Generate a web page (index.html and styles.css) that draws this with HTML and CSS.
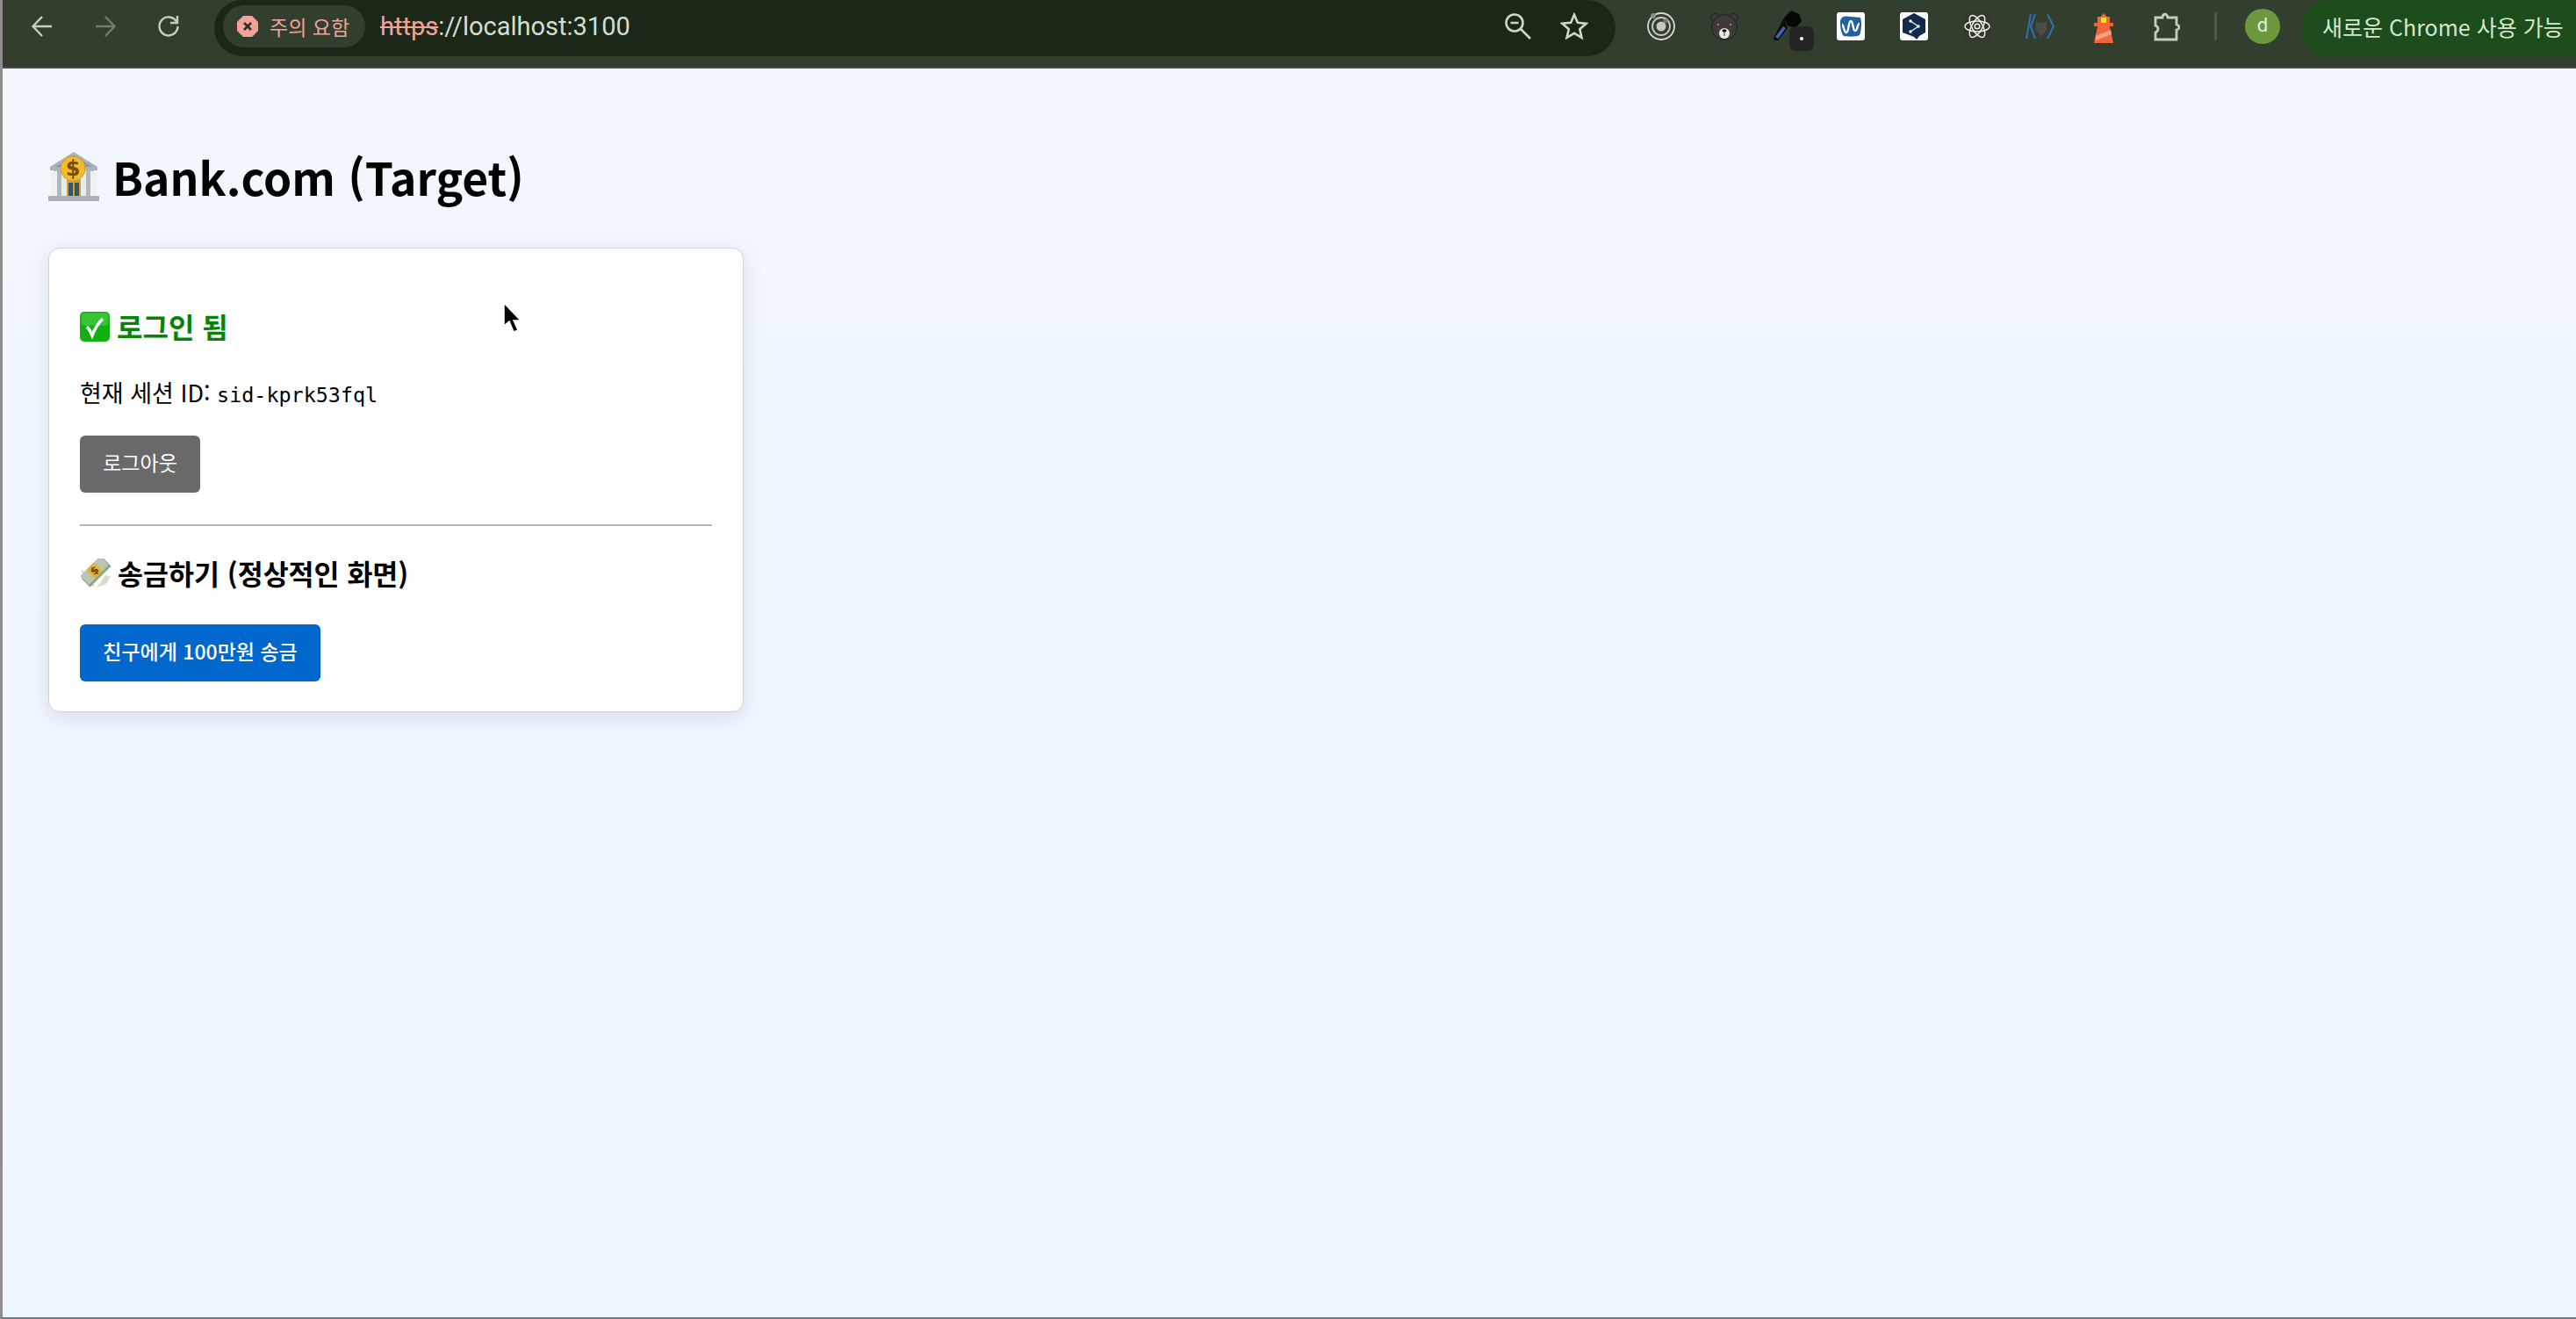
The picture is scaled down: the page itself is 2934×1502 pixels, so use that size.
FILE: index.html
```html
<!DOCTYPE html>
<html lang="ko">
<head>
<meta charset="utf-8">
<title>Bank.com (Target)</title>
<link rel="stylesheet" href="styles.css">
</head>
<body>
<div class="window">
  <header class="toolbar">
    <div class="nav">
      <span class="tool"><svg width="26" height="26" viewBox="0 0 26 26" fill="none" stroke="#c3d2bd" stroke-width="2.4"><path d="M24 13H3M13 2 2.5 13 13 24"/></svg></span>
      <span class="tool"><svg width="26" height="26" viewBox="0 0 26 26" fill="none" stroke="#6f7e6a" stroke-width="2.4"><path d="M2 13h21M13 2l10.500 11L13 24"/></svg></span>
      <span class="tool"><svg width="28" height="28" viewBox="0 0 28 28" fill="none" stroke="#c3d2bd" stroke-width="2.4"><path d="M23 8.500A10.500 10.500 0 1 0 24.500 14"/><path d="M24 2v8h-8"/></svg></span>
    </div>
    <div class="omnibox">
      <div class="chip">
        <svg width="24" height="24" viewBox="0 0 24 24"><path d="M7 0h10l7 7v10l-7 7H7l-7-7V7z" fill="#f2a19b"/><path d="m8 8 8 8M16 8l-8 8" stroke="#2a2f26" stroke-width="2.600"/></svg>
        <span class="chip-text">주의 요함</span>
      </div>
      <div class="url"><span class="url-scheme">https</span>://localhost:3100</div>
      <span class="omni-tool"><svg width="34" height="34" viewBox="0 0 34 34" fill="none" stroke="#cfd5c8" stroke-width="2.600"><circle cx="13" cy="13" r="9.500"/><path d="M8.500 13h9M20 20l11 11"/></svg></span>
      <span class="omni-tool"><svg width="32" height="32" viewBox="0 0 34 34" fill="none" stroke="#cfd5c8" stroke-width="2.800"><path d="m17 3 4.200 9.600 10.300 1-7.800 6.900 2.300 10.200L17 25.400l-8.900 5.300 2.300-10.200-7.800-6.900 10.300-1z"/></svg></span>
    </div>
    <div class="extensions">
      <span class="tool"><svg width="34" height="34" viewBox="0 0 34 34" fill="none"><circle cx="17" cy="17" r="15" stroke="#d5dbd2" stroke-width="1.800"/><circle cx="17" cy="17" r="10" stroke="#c6ccc3" stroke-width="1.800"/><circle cx="17" cy="17" r="5.500" fill="#c3c8c0"/><circle cx="8" cy="5" r="3" fill="#8b918a"/><circle cx="22" cy="11" r="2.500" fill="#777d76"/></svg></span>
      <span class="tool"><svg width="34" height="34" viewBox="0 0 34 34"><circle cx="6" cy="7" r="4.500" fill="#3c3a38" stroke="#222" /><circle cx="28" cy="7" r="4.500" fill="#3c3a38" stroke="#222"/><circle cx="17" cy="18" r="14.500" fill="#3d3b39" stroke="#1e1e1c"/><circle cx="10" cy="15" r="1.200" fill="#c47b3d"/><circle cx="24" cy="15" r="1.200" fill="#c47b3d"/><ellipse cx="17" cy="25" rx="6" ry="6" fill="#ece8e1"/><ellipse cx="17" cy="22" rx="2.500" ry="1.800" fill="#111"/><path d="M17 24v4" stroke="#333"/></svg></span>
      <span class="tool ext-badged">
        <svg width="36" height="36" viewBox="0 0 36 36"><path d="m18 20-11 14H3l-1-3L14 8z" fill="#0b0d0b"/><path d="M16 20 7 32l-3-2 9-12z" fill="#3f63c5"/><path d="m14 8 8-8 9 4 3 8-7 8-9-3z" fill="#060806"/></svg>
        <span class="badge"><span class="badge-dot"></span></span>
      </span>
      <span class="tool"><svg width="32" height="32" viewBox="0 0 32 32"><rect width="32" height="32" rx="3" fill="#fff"/><path d="M4 11C4 7 7 4 11 4.500L27 6c1.500 4 1.500 14-1 20-4 2-13 2-18 1-3-3-4-10-4-16z" fill="#22609f"/><path d="M6 14c2 0 2 9 5 9s2-13 5-13 2 11 5 11 2-8 5-8" fill="none" stroke="#fff" stroke-width="2.400"/></svg></span>
      <span class="tool"><svg width="32" height="32" viewBox="0 0 32 32"><rect width="32" height="32" rx="3" fill="#fff"/><path d="M16 1 29 8v15l-7 4-3 4-3-3-13-5V8z" fill="#132a4c"/><circle cx="12" cy="10" r="1.800" fill="#e8eef5"/><circle cx="21" cy="16" r="1.800" fill="#e8eef5"/><circle cx="12" cy="22" r="1.800" fill="#e8eef5"/><path d="m12 10 9 6-9 6" stroke="#e8eef5" stroke-width="1.400" fill="none"/></svg></span>
      <span class="tool"><svg width="32" height="32" viewBox="0 0 32 32" fill="none" stroke="#eef1ec" stroke-width="1.500"><rect width="32" height="32" fill="#2f3a2b" stroke="none"/><ellipse cx="16" cy="16" rx="14" ry="6"/><ellipse cx="16" cy="16" rx="14" ry="6" transform="rotate(60 16 16)"/><ellipse cx="16" cy="16" rx="14" ry="6" transform="rotate(120 16 16)"/><circle cx="16" cy="16" r="2.800"/></svg></span>
      <span class="tool"><svg width="34" height="34" viewBox="0 0 34 34" fill="none"><path d="M6 3 1 31M11 3 6 17l5 14M25 3l7 14-7 14" stroke="#2f6fb5" stroke-width="2"/><path d="M12 11l3 2h6l3-2v10l-6 8-6-8z" fill="#4b4d4c"/></svg></span>
      <span class="tool"><svg width="24" height="40" viewBox="0 0 24 40"><path d="M5 13 12 5l7 8z" fill="#f1663a"/><rect x="1" y="16" width="22" height="4" fill="#f1663a"/><rect x="5" y="9" width="14" height="9" fill="#f1663a"/><rect x="9" y="10" width="6" height="6" fill="#f3e21f"/><path d="M5 20h14l4 19H1z" fill="#f1663a"/><path d="m3 31 17-7 1 5-18 7z" fill="#f7a084"/></svg></span>
      <span class="tool"><svg width="30" height="34" viewBox="0 0 30 34" fill="none" stroke="#c2d0bc" stroke-width="2.800"><path d="M2 7h8c0-4 5-6 6 0h10v8c4 1 4 5 0 6v11H2v-8c4-2 4-6 0-8z"/></svg></span>
    </div>
    <span class="separator"></span>
    <span class="avatar">d</span>
    <div class="update-pill">새로운 Chrome 사용 가능</div>
  </header>
  <main class="page">
    <h1 class="title">
      <svg class="title-emoji" width="58" height="56" viewBox="0 0 58 56"><path d="M29 0 56 17v4H2v-4z" fill="#a9b4ba"/><path d="M29 4 50 17H8z" fill="#8b979e"/><rect x="6" y="21" width="46" height="29" fill="#aeb8bd"/><rect x="3" y="22" width="7" height="28" fill="#eef1f2"/><rect x="15" y="22" width="6" height="28" fill="#e7ebec"/><rect x="37" y="22" width="6" height="28" fill="#e7ebec"/><rect x="48" y="22" width="7" height="28" fill="#eef1f2"/><rect x="21" y="32" width="16" height="18" fill="#d2a033"/><rect x="23" y="35" width="12" height="15" fill="#31576a"/><path d="M29 35v15" stroke="#d2a033" stroke-width="2"/><rect y="50" width="58" height="6" rx="1" fill="#a7b1b7"/><circle cx="28" cy="19" r="14" fill="#f2bc2e" stroke="#d79a1c"/><text class="coin-mark" x="28" y="27" text-anchor="middle">$</text></svg>
      <span>Bank.com (Target)</span>
    </h1>
    <section class="card">
      <h2 class="status">
        <svg width="34" height="34" viewBox="0 0 34 34"><rect width="34" height="34" rx="5" fill="#12b010"/><rect x="1.500" y="1.500" width="31" height="14" rx="4" fill="#38c435"/><path d="M8 17c2 2 4 5 6 10 3-8 7-14 12-19" fill="none" stroke="#fff" stroke-width="3.400"/></svg>
        <span>로그인 됨</span>
      </h2>
      <p class="session">현재 세션 ID: <code class="session-id">sid-kprk53fql</code></p>
      <button class="btn btn-grey" type="button"><span class="btn-label">로그아웃</span></button>
      <hr class="rule">
      <h3 class="section-title">
        <svg width="36" height="34" viewBox="0 0 36 34"><path d="M1 12 6 26l11 7-7-15z" fill="#d5dccd"/><path d="m35 20-5 9-11 4 10-14z" fill="#d5dccd"/><g transform="rotate(-45 18 15)"><rect x="1" y="9" width="34" height="14" rx="1" fill="#8ea486"/><rect x="2" y="6" width="32" height="14" rx="1" fill="#b9c7ae"/><rect x="12" y="6" width="12" height="14" fill="#e2b13a"/><text class="bill-mark" x="18" y="17" text-anchor="middle">$</text></g></svg>
        <span>송금하기 (정상적인 화면)</span>
      </h3>
      <button class="btn btn-blue" type="button"><span class="btn-label">친구에게 100만원 송금</span></button>
    </section>
    <svg class="cursor" width="22" height="36" viewBox="0 0 22 36"><path d="M2 1v26l6-5 5 12 5-2-5-11h8z" fill="#000" stroke="#fff" stroke-width="1.500"/></svg>
  </main>
</div>
</body>
</html>
```

FILE: styles.css
```css
* { box-sizing: border-box; }
html, body { margin: 0; height: 100%; overflow: hidden; }
body { font-family: "Noto Sans CJK KR", "Noto Sans", sans-serif; color: #000; }

.window {
  height: 100%;
  display: flex;
  flex-direction: column;
  border-left: 3px solid #8e8e8e;
  border-bottom: 2px solid #6f7a80;
  background: linear-gradient(#f2f7ff, #edf5ff);
}

.toolbar {
  height: 78px;
  flex: none;
  display: flex;
  align-items: flex-start;
  padding-left: 9px;
  background: #333f2e;
  border-bottom: 2px solid #474e46;
  overflow: hidden;
  font-family: "Noto Sans CJK KR", Roboto, sans-serif;
}

.nav, .extensions { display: flex; height: 60px; flex: none; }
.tool {
  width: 72px;
  height: 60px;
  display: flex;
  align-items: center;
  justify-content: center;
  position: relative;
}

.omnibox {
  width: 1596px;
  flex: none;
  height: 64px;
  margin-left: 16px;
  padding: 6px 15px 0 10px;
  display: flex;
  align-items: flex-start;
  background: #1b2818;
  border-radius: 32px;
}
.chip {
  width: 162px;
  height: 48px;
  flex: none;
  display: flex;
  align-items: center;
  gap: 13px;
  padding-left: 16px;
  border-radius: 24px;
  background: #323f2e;
}
.chip-text { font-size: 23px; color: #efa29b; white-space: nowrap; }
.url {
  flex: 1;
  height: 48px;
  margin-left: 17px;
  font-family: Roboto, sans-serif;
  font-size: 29px;
  line-height: 48px;
  color: #d3ded0;
  white-space: nowrap;
}
.url-scheme { color: #efa29b; text-decoration: line-through; }
.omni-tool {
  width: 64px;
  height: 48px;
  display: flex;
  align-items: center;
  justify-content: center;
}

.extensions { margin-left: 16px; }
.badge {
  position: absolute;
  left: 38px;
  top: 30px;
  width: 28px;
  height: 28px;
  border-radius: 7px;
  background: #232624;
  display: flex;
  align-items: center;
  justify-content: center;
}
.badge-dot { width: 4px; height: 4px; border-radius: 50%; background: #fff; }

.separator {
  width: 3px;
  height: 32px;
  margin: 14px 0 0 18px;
  background: #4c5949;
  flex: none;
}
.avatar {
  width: 40px;
  height: 40px;
  margin: 10px 0 0 32px;
  flex: none;
  border-radius: 50%;
  background: #6a9a3d;
  color: #e8f0df;
  font: 22px/38px Roboto, sans-serif;
  text-align: center;
}
.update-pill {
  margin-left: 24px;
  height: 64px;
  width: 340px;
  flex: none;
  padding-left: 24px;
  border-radius: 32px;
  background: #1e4d1c;
  color: #d5e8cf;
  font-size: 25px;
  line-height: 60px;
  white-space: nowrap;
}

.page { flex: 1; position: relative; padding: 0 52px; }

.title {
  display: flex;
  align-items: center;
  gap: 15px;
  margin: 90px 0 0;
  height: 65px;
  font-size: 51.500px;
  font-weight: 700;
  line-height: 64px;
  white-space: nowrap;
}
.title-emoji { flex: none; }
.coin-mark { font: 700 24px "DejaVu Sans", sans-serif; fill: #7a4d10; }
.bill-mark { font: 700 12px "DejaVu Sans", sans-serif; fill: #6a4a10; }

.card {
  width: 792px;
  height: 529px;
  margin-top: 49px;
  padding: 0 35px;
  background: #fff;
  border: 1px solid #cfd2d6;
  border-radius: 13px;
  box-shadow: 0 6px 22px rgba(0, 0, 0, .1);
}
.status {
  display: flex;
  align-items: center;
  gap: 8px;
  margin: 71px 0 0;
  height: 36px;
  font-size: 32px;
  font-weight: 700;
  line-height: 36px;
  color: #078407;
}
.status span { margin-top: -3px; }
.session {
  margin: 39px 0 0;
  height: 36px;
  font-size: 27px;
  line-height: 36px;
  white-space: nowrap;
}
.session-id { font: 23.400px "DejaVu Sans Mono", monospace; }
.btn {
  display: block;
  height: 65px;
  padding: 0;
  border: 0;
  border-radius: 6px;
  color: #fff;
  font-family: "Noto Sans CJK KR", sans-serif;
  font-size: 23px;
  white-space: nowrap;
}
.btn-label { display: block; margin-top: -5px; }
.btn-grey { margin-top: 31px; width: 137px; background: #696969; }
.btn-blue { margin-top: 38px; width: 274px; background: #0067cc; font-weight: 500; }
.rule { margin: 36px 0 0; border: 0; border-top: 2px solid #b4b4b4; }
.section-title {
  display: flex;
  align-items: center;
  gap: 7px;
  margin: 34px 0 0;
  height: 40px;
  font-size: 31.500px;
  font-weight: 700;
  line-height: 40px;
  white-space: nowrap;
}
.section-title span { margin-top: -3px; }
.cursor { position: absolute; left: 569px; top: 266px; }
```
